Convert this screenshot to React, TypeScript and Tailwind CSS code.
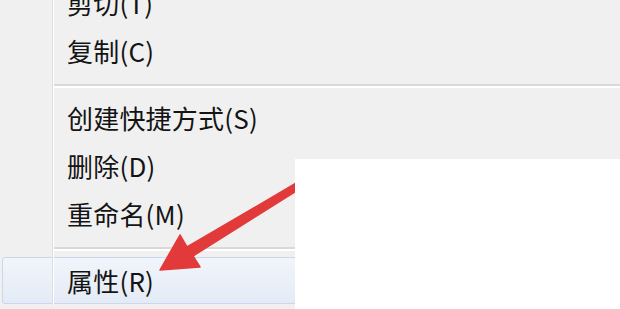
import React from "react";

const Item = ({ label, active }: { label: string; active?: boolean }) => (
  <div className="relative h-[48px] flex items-center">
    {active && (
      <div className="absolute left-[2px] right-0 top-0 bottom-[1px] rounded-[3px] border border-[#c9d8ec] bg-gradient-to-b from-[#f1f5fb] to-[#e4ebf6]" />
    )}
    <div className="relative flex h-full">
      <div className="w-[52px] shrink-0" />
      <div className="w-[1px] bg-[#dedede]" />
      <div className="w-[1px] bg-white" />
    </div>
    <span className="relative pl-[13px] text-[26px] leading-none text-[#141414] tracking-[0.2px]">{label}</span>
  </div>
);

const Sep = () => (
  <div className="relative h-[19px] flex">
    <div className="w-[52px] shrink-0" />
    <div className="w-[1px] bg-[#dedede]" />
    <div className="w-[1px] bg-white" />
    <div className="flex-1 flex flex-col pt-[9px]">
      <div className="h-[2px] bg-[#d9d9d9]" />
      <div className="h-[2px] bg-white" />
    </div>
  </div>
);

export default function App() {
  return (
    <div
      className="relative w-[620px] h-[309px] overflow-hidden bg-[#f0f0f0]"
      style={{ fontFamily: '"Noto Sans CJK SC", "Noto Sans", sans-serif' }}
    >
      <div className="flex flex-col -mt-[21px]">
        <Item label="剪切(T)" />
        <Item label="复制(C)" />
        <Sep />
        <Item label="创建快捷方式(S)" />
        <Item label="删除(D)" />
        <Item label="重命名(M)" />
        <Sep />
        <Item label="属性(R)" active />
      </div>
      <svg className="absolute left-0 top-0" width="620" height="309" viewBox="0 0 620 309">
        <polygon
          points="160,270 200,267 193,256 301,188 298,182 187,247 180,235"
          fill="#e23a3a"
          stroke="#e23a3a"
          strokeWidth="1.5"
          strokeLinejoin="round"
        />
      </svg>
      <div className="absolute left-[295px] top-[159px] right-0 bottom-0 bg-white" />
    </div>
  );
}
